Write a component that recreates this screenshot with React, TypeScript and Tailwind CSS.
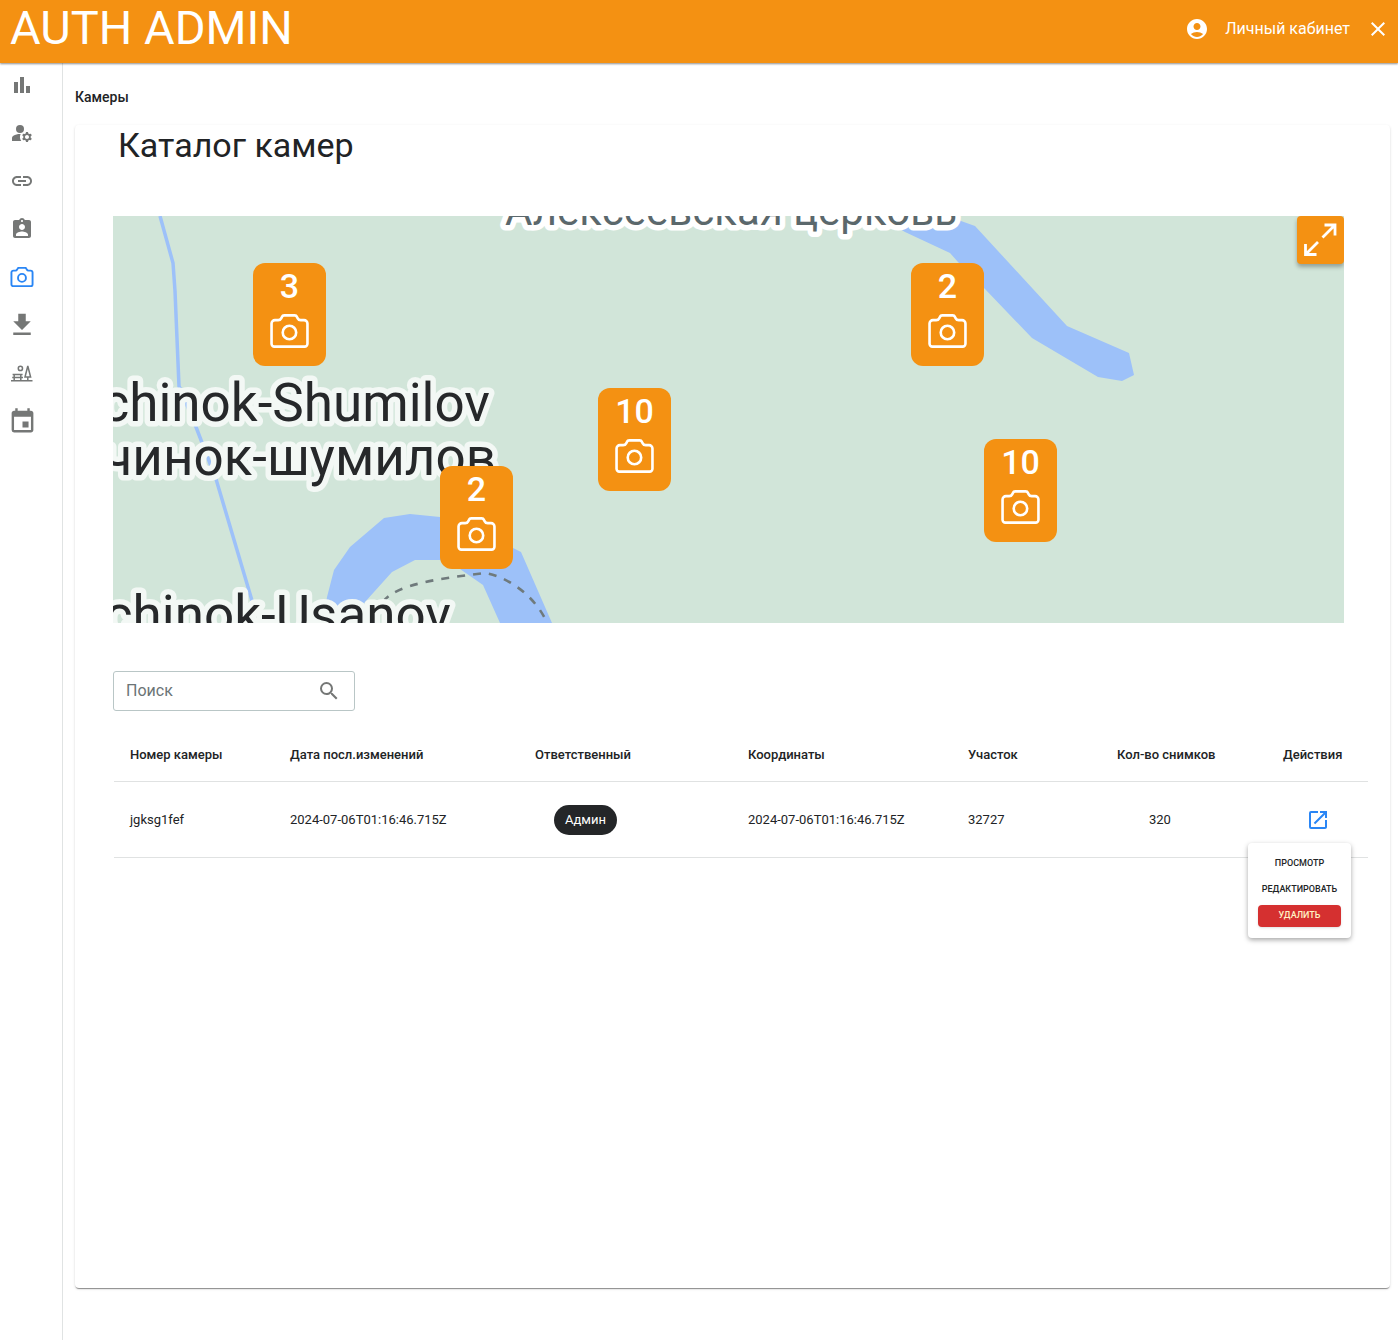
import { useState } from "react";
import type { ReactNode } from "react";
import {
  MdAccountCircle,
  MdAssignmentInd,
  MdBarChart,
  MdClose,
  MdDownload,
  MdEvent,
  MdLink,
  MdManageAccounts,
  MdOpenInNew,
  MdSearch,
} from "react-icons/md";

function CameraIcon({
  className,
  strokeWidth = 2.6,
}: {
  className: string;
  strokeWidth?: number;
}) {
  return (
    <svg
      viewBox="0 0 38.7 33.8"
      className={className}
      fill="none"
      stroke="currentColor"
      strokeWidth={strokeWidth}
      aria-hidden="true"
    >
      <path d="M1.5 9.5a3.4 3.4 0 0 1 3.4-3.4h3.2c1.6 0 2.4-.6 3-1.8l.6-1.2c.5-1.1 1.2-1.7 2.4-1.7h10.4c1.2 0 1.9.6 2.4 1.7l.6 1.2c.6 1.2 1.4 1.8 3 1.8h3.3a3.4 3.4 0 0 1 3.4 3.4v20.1a2.8 2.8 0 0 1-2.8 2.8H4.3a2.8 2.8 0 0 1-2.8-2.8z" />
      <circle cx="19.3" cy="18.4" r="6.7" />
    </svg>
  );
}

function ParkIcon({ className }: { className: string }) {
  return (
    <svg
      viewBox="0 0 22 18"
      className={className}
      fill="none"
      stroke="currentColor"
      strokeWidth="1.5"
      aria-hidden="true"
    >
      <circle cx="9.4" cy="4.4" r="2.1" />
      <path d="M16.8 2l-2.8 11h5.6zM16.8 13v4M0 16.8h21.5" />
      <path d="M1.6 10.6h10M1.2 13.6h10.8M3.2 10.6V17M9.8 10.6V17" />
    </svg>
  );
}

function ExpandIcon() {
  return (
    <svg
      viewBox="0 0 47 48"
      className="h-12 w-full"
      fill="none"
      stroke="currentColor"
      strokeWidth="2.8"
      aria-hidden="true"
    >
      <path d="M25.5 21.5L38 9M27.5 9h10.5v10.5" />
      <path d="M21 26L8.5 38.5M8.5 28v10.5h11" />
    </svg>
  );
}

const navItems: { label: string; icon: ReactNode; active?: boolean }[] = [
  { label: "Статистика", icon: <MdBarChart className="size-6" /> },
  { label: "Пользователи", icon: <MdManageAccounts className="size-6" /> },
  { label: "Ссылки", icon: <MdLink className="size-6" /> },
  { label: "Сотрудники", icon: <MdAssignmentInd className="size-6" /> },
  {
    label: "Камеры",
    icon: <CameraIcon className="h-5 w-6" strokeWidth={3.2} />,
    active: true,
  },
  { label: "Загрузки", icon: <MdDownload className="size-[30px] shrink-0" /> },
  { label: "Участки", icon: <ParkIcon className="h-[18px] w-[22px]" /> },
  { label: "Календарь", icon: <MdEvent className="size-[29px] shrink-0" /> },
];

const pins = [
  { count: 3, position: "left-[140px] top-[47px]" },
  { count: 10, position: "left-[485px] top-[172px]" },
  { count: 2, position: "left-[798px] top-[47px]" },
  { count: 2, position: "left-[327px] top-[250px]" },
  { count: 10, position: "left-[871px] top-[223px]" },
];

const columns = [
  { title: "Номер камеры", width: "w-[160px]" },
  { title: "Дата посл.изменений", width: "w-[245px]" },
  { title: "Ответственный", width: "w-[213px]" },
  { title: "Координаты", width: "w-[220px]" },
  { title: "Участок", width: "w-[149px]" },
  { title: "Кол-во снимков", width: "w-[166px]" },
  { title: "Действия", width: "w-[101px]" },
];

function Header() {
  return (
    <header className="relative z-10 flex h-[63px] items-center justify-between bg-[#f49112] pl-[10px] pr-2 text-white shadow-[0_1px_2px_rgba(0,0,0,0.45)]">
      <span className="mb-2 text-[47px] leading-12">AUTH ADMIN</span>
      <div className="mb-1.5 flex items-center">
        <a href="#account" className="flex items-center gap-4">
          <MdAccountCircle className="size-6" />
          <span className="text-base">Личный кабинет</span>
        </a>
        <button type="button" aria-label="Закрыть" className="ml-4">
          <MdClose className="size-6" />
        </button>
      </div>
    </header>
  );
}

function Sidebar() {
  return (
    <nav className="w-[63px] shrink-0 border-r border-[#e0e3e3] pt-[10px]">
      <ul className="flex flex-col gap-6 pl-[10px]">
        {navItems.map((item) => (
          <li key={item.label}>
            <a
              href="#"
              aria-label={item.label}
              className={`flex size-6 items-center justify-center ${
                item.active ? "text-[#2a86f5]" : "text-[#757776]"
              }`}
            >
              {item.icon}
            </a>
          </li>
        ))}
      </ul>
    </nav>
  );
}

function CameraMap() {
  return (
    <div className="relative ml-[38px] mr-[46px] mt-[51px] h-[407px] overflow-hidden bg-[#d1e5d9]">
      <svg className="absolute inset-0 size-full" aria-hidden="true">
        {/* Rivers */}
        <g fill="#9dc1f9">
          <path d="M765 0L792 16L837 37L845 46L872 73L919 122L985 161L1009 165L1021 159L1016 137L954 110L862 10L848 5L840 0z" />
          <path d="M210 407L214 381L221 354L237 331L271 302L297 298L327 301L370 310L400 332L408 336L439 407H387L370 369L347 353L327 344H302L279 356L252 386L240 407z" />
        </g>
        <path
          d="M47 0L60 47L62 75L66 170L83 211L103 263L140 388"
          fill="none"
          stroke="#9dc1f9"
          strokeWidth="3.5"
        />
        <path
          d="M270 386C282 368 330 362 372 357C400 362 425 385 434 407"
          fill="none"
          stroke="#6f7a7c"
          strokeWidth="2.6"
          strokeDasharray="8 8"
        />
        {/* Place names */}
        <g
          fontFamily="Roboto, sans-serif"
          fontSize="53"
          textAnchor="end"
          fill="#26282a"
          stroke="#f3f8f5"
          strokeWidth="11"
          strokeLinejoin="round"
          paintOrder="stroke"
        >
          <text x="377" y="205">
            chinok-Shumilov
          </text>
          <text x="383" y="259">
            чинок-шумилов
          </text>
          <text x="338" y="417">
            chinok-Usanov
          </text>
          <text x="844" y="9" fontSize="42" fill="#5b686c" stroke="#ffffff">
            Алексеевская церковь
          </text>
        </g>
      </svg>

      {pins.map((pin) => (
        <button
          key={pin.position}
          type="button"
          className={`absolute flex h-[103px] w-[73px] flex-col items-center rounded-xl bg-[#f49112] pt-[3px] text-white ${pin.position}`}
        >
          <span className="text-[34px] font-medium leading-10">
            {pin.count}
          </span>
          <CameraIcon className="mt-2 h-[34px] w-[39px]" />
        </button>
      ))}

      <button
        type="button"
        aria-label="На весь экран"
        className="absolute right-0 top-0 h-12 w-[47px] rounded-sm bg-[#f49112] text-white shadow-[0_3px_4px_rgba(0,0,0,0.3)]"
      >
        <ExpandIcon />
      </button>
    </div>
  );
}

function ActionsMenu() {
  return (
    <div className="absolute right-[17px] top-[61px] flex w-[103px] flex-col gap-1 rounded-sm bg-white px-[10px] pb-[11px] pt-[10px] text-[9px] font-medium shadow-[0_2px_5px_rgba(0,0,0,0.35)]">
      <button type="button" className="flex h-[22px] items-center justify-center">
        ПРОСМОТР
      </button>
      <button type="button" className="flex h-[22px] items-center justify-center">
        РЕДАКТИРОВАТЬ
      </button>
      <button
        type="button"
        className="flex h-[22px] items-center justify-center rounded-sm bg-[#d53030] text-[#fff3c4] shadow-sm"
      >
        УДАЛИТЬ
      </button>
    </div>
  );
}

function CamerasTable() {
  const [menuOpen, setMenuOpen] = useState(true);

  return (
    <div className="ml-[39px] mr-[22px] mt-[17px]">
      <table className="w-full table-fixed text-left text-[13px] text-[#212325]">
        <thead>
          <tr className="h-[53px] border-b border-[#e0e2e2]">
            {columns.map((column) => (
              <th
                key={column.title}
                className={`whitespace-nowrap pl-4 font-medium ${column.width}`}
              >
                {column.title}
              </th>
            ))}
          </tr>
        </thead>
        <tbody>
          <tr className="h-[76px] border-b border-[#e0e2e2] *:pt-0.5">
            <td className="pl-4">jgksg1fef</td>
            <td className="pl-4">2024-07-06T01:16:46.715Z</td>
            <td className="pl-[35px]">
              <span className="inline-flex h-[30px] items-center rounded-full bg-[#242628] px-[11px] text-white">
                Админ
              </span>
            </td>
            <td className="pl-4">2024-07-06T01:16:46.715Z</td>
            <td className="pl-4">32727</td>
            <td className="pl-12">320</td>
            <td className="relative pl-[39px]">
              <button
                type="button"
                aria-label="Действия"
                aria-expanded={menuOpen}
                className="flex text-[#2a86f5]"
                onClick={() => setMenuOpen(!menuOpen)}
              >
                <MdOpenInNew className="size-6" />
              </button>
              {menuOpen && <ActionsMenu />}
            </td>
          </tr>
        </tbody>
      </table>
    </div>
  );
}

export default function App() {
  return (
    <div className="flex min-h-screen flex-col bg-white font-[Roboto,sans-serif] text-[#212325]">
      <Header />
      <div className="flex flex-1">
        <Sidebar />
        <main className="flex min-w-0 flex-1 flex-col pb-[52px] pl-3 pr-2 pt-6">
          <p className="text-sm font-medium">Камеры</p>

          <section className="mt-[18px] flex-1 rounded-sm shadow-[0_2px_1px_-1px_rgba(0,0,0,0.3),0_1px_1px_rgba(0,0,0,0.14),0_1px_3px_rgba(0,0,0,0.12)]">
            <h1 className="pl-[43px] text-[34px] leading-10">Каталог камер</h1>

            <CameraMap />

            {/* Search */}
            <label className="ml-[38px] mt-12 flex h-10 w-[242px] items-center rounded-[3px] border border-[#b9c6c6] pl-3 pr-[13px]">
              <input
                type="text"
                placeholder="Поиск"
                aria-label="Поиск"
                className="min-w-0 flex-1 text-base outline-none placeholder:text-[#6b7476]"
              />
              <MdSearch className="size-6 text-[#757776]" />
            </label>

            <CamerasTable />
          </section>
        </main>
      </div>
    </div>
  );
}
